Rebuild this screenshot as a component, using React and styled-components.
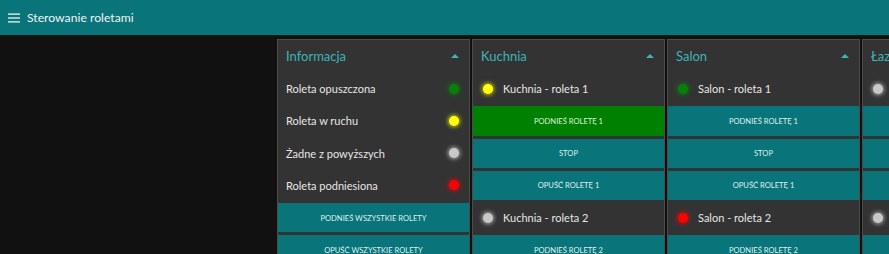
import React from "react";
import styled, { createGlobalStyle } from "styled-components";

const Global = createGlobalStyle`
  html, body { margin: 0; padding: 0; background: #111111; overflow: hidden; }
  body { font-family: Lato, "Noto Sans", sans-serif; }
`;

const Page = styled.div`
  width: 889px;
  height: 254px;
  background: #111111;
  overflow: hidden;
`;

const Toolbar = styled.header`
  height: 35px;
  background: #097479;
  display: flex;
  align-items: center;
  padding-left: 8px;
  gap: 7px;
  color: #ffffff;
`;

const Title = styled.div`
  font-size: 12.2px;
  color: #f2f2f2;
  padding-bottom: 1px;
`;

const Groups = styled.main`
  display: flex;
  gap: 2px;
  padding: 4px 0 0 277px;
`;

const Group = styled.section`
  flex: 0 0 193px;
  width: 193px;
  height: 240px;
  box-sizing: border-box;
  background: #333333;
  border: 1px solid #4c4c4c;
  border-bottom: none;
  display: flex;
  flex-direction: column;
  gap: 3px;
`;

const GroupHead = styled.div`
  height: 31px;
  flex: 0 0 31px;
  display: flex;
  align-items: center;
  justify-content: space-between;
  padding: 0 10px 0 8px;
  color: #3db4b8;
  font-size: 13px;
  white-space: nowrap;
  overflow: hidden;
`;

const Caret = styled.span`
  flex: 0 0 auto;
  width: 0;
  height: 0;
  border-left: 4px solid transparent;
  border-right: 4px solid transparent;
  border-bottom: 4px solid #3db4b8;
  margin-top: 1px;
`;

const Row = styled.div`
  height: 29.25px;
  flex: 0 0 29.25px;
  display: flex;
  align-items: center;
  justify-content: ${(p) => (p.$ledRight ? "space-between" : "flex-start")};
  gap: 10px;
  padding: 0 10px 0 ${(p) => (p.$ledRight ? "8px" : "10px")};
  color: #e6e6e6;
  font-size: 11px;
  white-space: nowrap;
  overflow: hidden;
`;

const ledColors = {
  green: { bg: "#0a7d0a", glow: "rgba(0,140,0,0.7)" },
  yellow: { bg: "#ffff10", glow: "rgba(255,255,0,0.75)" },
  gray: { bg: "#c8c8c8", glow: "rgba(255,255,255,0.6)" },
  red: { bg: "#ff0000", glow: "rgba(255,0,0,0.7)" },
};

const Led = styled.span`
  flex: 0 0 10px;
  width: 10px;
  height: 10px;
  border-radius: 50%;
  background: ${(p) => ledColors[p.$c].bg};
  box-shadow: 0 0 4px 1px ${(p) => ledColors[p.$c].glow};
`;

const Button = styled.button`
  height: 29.25px;
  flex: 0 0 29.25px;
  width: 100%;
  border: none;
  margin: 0;
  padding: 0;
  background: ${(p) => (p.$active ? "#008000" : "#097479")};
  color: ${(p) => (p.$active ? "#d8f5d8" : "#dff2f2")};
  font-family: Lato, "Noto Sans", sans-serif;
  font-size: 7.6px;
  text-transform: uppercase;
  letter-spacing: 0;
  white-space: nowrap;
  overflow: hidden;
  cursor: pointer;
`;

function Hamburger() {
  return (
    <svg width="12" height="10" viewBox="0 0 12 10">
      <rect x="0" y="0.5" width="12" height="1.2" fill="#fff" />
      <rect x="0" y="4.4" width="12" height="1.2" fill="#fff" />
      <rect x="0" y="8.3" width="12" height="1.2" fill="#fff" />
    </svg>
  );
}

const roomGroups = [
  { name: "Kuchnia", leds: ["yellow", "gray"], active: 0 },
  { name: "Salon", leds: ["green", "red"], active: -1 },
  { name: "Łazienka", leds: ["gray", "gray"], active: -1 },
];

export default function App() {
  return (
    <Page>
      <Global />
      <Toolbar>
        <Hamburger />
        <Title>Sterowanie roletami</Title>
      </Toolbar>
      <Groups>
        <Group>
          <GroupHead>
            <span>Informacja</span>
            <Caret />
          </GroupHead>
          <Row $ledRight>
            <span>Roleta opuszczona</span>
            <Led $c="green" />
          </Row>
          <Row $ledRight>
            <span>Roleta w ruchu</span>
            <Led $c="yellow" />
          </Row>
          <Row $ledRight>
            <span>Żadne z powyższych</span>
            <Led $c="gray" />
          </Row>
          <Row $ledRight>
            <span>Roleta podniesiona</span>
            <Led $c="red" />
          </Row>
          <Button>Podnieś wszystkie rolety</Button>
          <Button>Opuść wszystkie rolety</Button>
        </Group>
        {roomGroups.map((g) => (
          <Group key={g.name}>
            <GroupHead>
              <span>{g.name}</span>
              <Caret />
            </GroupHead>
            <Row>
              <Led $c={g.leds[0]} />
              <span>{g.name} - roleta 1</span>
            </Row>
            <Button $active={g.active === 0}>Podnieś roletę 1</Button>
            <Button>Stop</Button>
            <Button>Opuść roletę 1</Button>
            <Row>
              <Led $c={g.leds[1]} />
              <span>{g.name} - roleta 2</span>
            </Row>
            <Button>Podnieś roletę 2</Button>
          </Group>
        ))}
      </Groups>
    </Page>
  );
}
